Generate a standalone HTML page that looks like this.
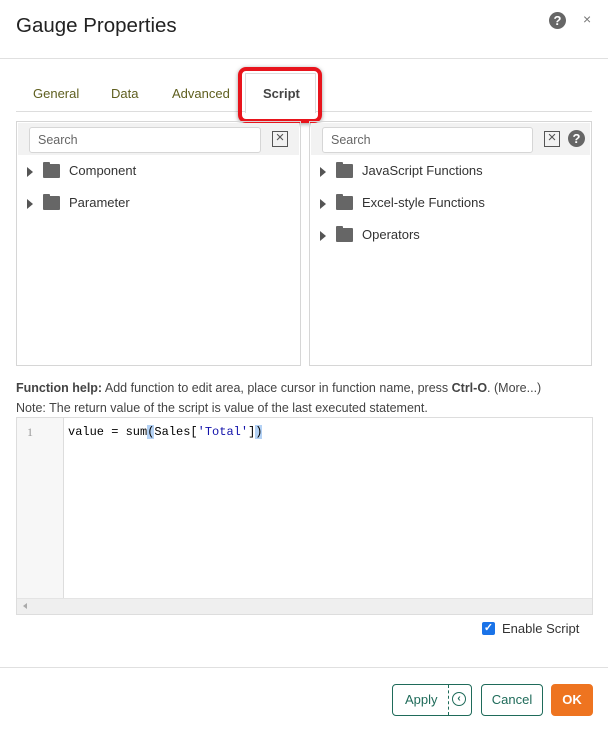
<!DOCTYPE html>
<html><head><style>
*{box-sizing:border-box;margin:0;padding:0}
body{width:608px;height:729px;background:#fff;font-family:"Liberation Sans",sans-serif;position:relative;overflow:hidden;color:#333}
.a{position:absolute}
.tab{position:absolute;top:86px;font-size:13px;color:#5f5f1f}
.panel{position:absolute;top:121px;height:245px;border:1px solid #d6d6d6}
.sbar{position:absolute;left:1px;right:1px;top:1px;height:32px;background:#f2f2f2}
.inp{position:absolute;top:4px;height:26px;border:1px solid #d6d6d6;border-radius:3px;background:#fff;font-size:12.5px;color:#666;padding:5px 8px}
.xb{position:absolute;top:8px;width:16px;height:16px;border:1.5px solid #555;font-size:15px;line-height:12px;text-align:center;color:#555}
.item{position:absolute;font-size:13px;color:#333;height:16px}
.tri{position:absolute;left:0;top:3px;width:0;height:0;border-left:6px solid #555;border-top:5px solid transparent;border-bottom:5px solid transparent}
.fold{position:absolute;left:16px;top:0;width:17px;height:14px;background:#666;border-radius:1px}
.fold:before{content:"";position:absolute;left:0;top:-2px;width:7px;height:3px;background:#666;border-radius:1px 1px 0 0}
.lbl{position:absolute;left:42px;top:-1px;white-space:nowrap}
.btn{position:absolute;top:684px;height:32px;border:1px solid #1f6b5a;border-radius:4px;color:#1f6b5a;font-size:13px;line-height:30px;text-align:center}
</style></head><body>
<div class="a" style="left:16px;top:14px;font-size:20.5px;color:#222">Gauge Properties</div>
<div class="a" style="left:549px;top:12px;width:17px;height:17px;border-radius:50%;background:#666;color:#fff;font-size:13px;font-weight:bold;text-align:center;line-height:17px">?</div>
<div class="a" style="left:583px;top:11px;font-size:14px;color:#777">×</div>
<div class="a" style="left:0;top:58px;width:608px;height:1px;background:#e0e0e0"></div>

<div class="tab" style="left:33px">General</div>
<div class="tab" style="left:111px">Data</div>
<div class="tab" style="left:172px">Advanced</div>
<div class="a" style="left:16px;top:111px;width:576px;height:1px;background:#ddd"></div>
<div class="a" style="left:245px;top:73px;width:71px;height:40px;background:#fff;border:1px solid #ddd;border-bottom:none"></div>
<div class="tab" style="left:263px;color:#444;font-weight:bold">Script</div>
<div class="a" style="left:238px;top:67px;width:84px;height:56px;border:4px solid #e8141c;border-radius:8px;box-shadow:0 1px 4px rgba(0,0,0,.4)"></div>

<div class="panel" style="left:16px;width:285px">
 <div class="sbar"><div class="inp" style="left:11px;width:232px">Search</div><div class="xb" style="left:254px">×</div></div>
 <div class="item" style="left:10px;top:42px;width:200px"><div class="tri"></div><div class="fold"></div><div class="lbl">Component</div></div>
 <div class="item" style="left:10px;top:74px;width:200px"><div class="tri"></div><div class="fold"></div><div class="lbl">Parameter</div></div>
</div>
<div class="panel" style="left:309px;width:283px">
 <div class="sbar"><div class="inp" style="left:11px;width:211px">Search</div><div class="xb" style="left:233px">×</div>
 <div class="a" style="left:257px;top:7px;width:17px;height:17px;border-radius:50%;background:#666;color:#fff;font-size:13px;font-weight:bold;text-align:center;line-height:17px">?</div></div>
 <div class="item" style="left:10px;top:42px;width:250px"><div class="tri"></div><div class="fold"></div><div class="lbl">JavaScript Functions</div></div>
 <div class="item" style="left:10px;top:74px;width:250px"><div class="tri"></div><div class="fold"></div><div class="lbl">Excel-style Functions</div></div>
 <div class="item" style="left:10px;top:106px;width:250px"><div class="tri"></div><div class="fold"></div><div class="lbl">Operators</div></div>
</div>

<div class="a" style="left:16px;top:381px;font-size:12.5px;color:#444;white-space:nowrap"><b>Function help:</b> Add function to edit area, place cursor in function name, press <b>Ctrl-O</b>. (More...)</div>
<div class="a" style="left:16px;top:401px;font-size:12.5px;color:#444;white-space:nowrap">Note: The return value of the script is value of the last executed statement.</div>

<div class="a" style="left:16px;top:417px;width:577px;height:198px;border:1px solid #ddd">
 <div class="a" style="left:0;top:0;width:47px;height:180px;background:#f7f7f7;border-right:1px solid #ddd"></div>
 <div class="a" style="left:10px;top:7px;font-family:'Liberation Serif',serif;font-size:12px;color:#999">1</div>
 <div class="a" style="left:51px;top:7px;font-family:'Liberation Mono',monospace;font-size:12px;color:#000;white-space:pre">value = sum<span style="background:#b4d2f5">(</span>Sales[<span style="color:#11a">'Total'</span>]<span style="background:#b4d2f5">)</span></div>
 <div class="a" style="left:0;top:180px;width:575px;height:16px;background:#efefef;border-top:1px solid #e4e4e4"></div>
 <div class="a" style="left:6px;top:185px;width:0;height:0;border-right:4px solid #aaa;border-top:3px solid transparent;border-bottom:3px solid transparent"></div>
</div>

<div class="a" style="left:482px;top:622px;width:13px;height:13px;background:#1a73e8;border-radius:2px;color:#fff;font-size:11px;line-height:13px;text-align:center;font-weight:bold">✓</div>
<div class="a" style="left:502px;top:621px;font-size:13px;color:#333">Enable Script</div>

<div class="a" style="left:0;top:667px;width:608px;height:1px;background:#e0e0e0"></div>
<div class="btn" style="left:392px;width:80px"><span style="position:absolute;left:12px">Apply</span>
 <div class="a" style="left:55px;top:0;height:30px;border-left:1px dashed #1f6b5a"></div>
 <div class="a" style="left:59px;top:7px;width:14px;height:14px;border:1.5px solid #1f6b5a;border-radius:50%;font-size:10px;line-height:11px;font-weight:bold">‹</div></div>
<div class="btn" style="left:481px;width:62px">Cancel</div>
<div class="btn" style="left:551px;width:42px;background:#ee7420;border-color:#ee7420;color:#fff;font-weight:bold">OK</div>
</body></html>
